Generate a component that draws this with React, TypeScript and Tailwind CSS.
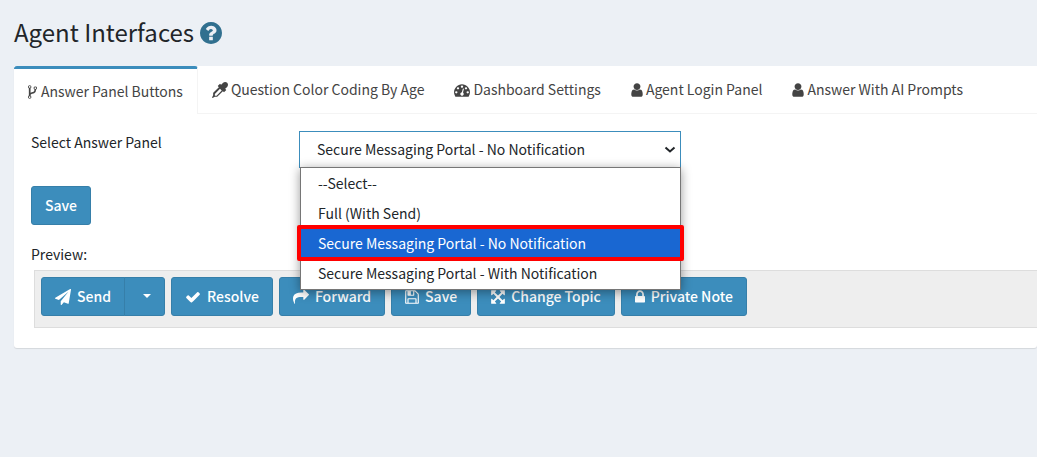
import { useState, type ReactNode } from "react";

type IconShape = { box: string; size: string; d: string };

// 1792 units tall, cropped to each glyph's advance width
const ICONS: Record<string, IconShape> = {
  fork: {
    box: "384 0 1024 1792",
    size: "h-4 w-[9px]",
    d: "M672 1472q0-40-28-68t-68-28-68 28-28 68 28 68 68 28 68-28 28-68zm0-1152q0-40-28-68t-68-28-68 28-28 68 28 68 68 28 68-28 28-68zm640 128q0-40-28-68t-68-28-68 28-28 68 28 68 68 28 68-28 28-68zm96 0q0 52-26 96.5t-70 69.5q-2 287-226 414-67 38-203 81-128 40-169.5 71t-41.5 100v26q44 25 70 69.5t26 96.5q0 80-56 136t-136 56-136-56-56-136q0-52 26-96.5t70-69.5v-820q-44-25-70-69.5t-26-96.5q0-80 56-136t136-56 136 56 56 136q0 52-26 96.5t-70 69.5v497q54-26 154-57 55-17 87.5-29.5t70.5-31 59-39.5 40.5-51 28-69.5 8.5-91.5q-44-25-70-69.5t-26-96.5q0-80 56-136t136-56 136 56 56 136z",
  },
  dropper: {
    box: "0 0 1792 1792",
    size: "size-4",
    d: "M1698 94q94 94 94 226.5t-94 225.5l-225 223 104 104q10 10 10 23t-10 23l-210 210q-10 10-23 10t-23-10l-105-105-603 603q-37 37-90 37h-203l-256 128-64-64 128-256v-203q0-53 37-90l603-603-105-105q-10-10-10-23t10-23l210-210q10-10 23-10t23 10l104 104 223-225q93-94 225.5-94t226.5 94zm-1186 1442l576-576-192-192-576 576v192h192z",
  },
  gauge: {
    box: "0 0 1792 1792",
    size: "size-4",
    d: "M384 1152q0-53-37.5-90.5t-90.5-37.5-90.5 37.5-37.5 90.5 37.5 90.5 90.5 37.5 90.5-37.5 37.5-90.5zm192-448q0-53-37.5-90.5t-90.5-37.5-90.5 37.5-37.5 90.5 37.5 90.5 90.5 37.5 90.5-37.5 37.5-90.5zm428 481l101-382q6-26-7.5-48.5t-38.5-29.5-48 6.5-30 39.5l-101 382q-60 5-107 43.5t-63 98.5q-20 77 20 146t117 89 146-20 89-117q16-60-6-117t-72-91zm660-33q0-53-37.5-90.5t-90.5-37.5-90.5 37.5-37.5 90.5 37.5 90.5 90.5 37.5 90.5-37.5 37.5-90.5zm-640-640q0-53-37.5-90.5t-90.5-37.5-90.5 37.5-37.5 90.5 37.5 90.5 90.5 37.5 90.5-37.5 37.5-90.5zm448 192q0-53-37.5-90.5t-90.5-37.5-90.5 37.5-37.5 90.5 37.5 90.5 90.5 37.5 90.5-37.5 37.5-90.5zm320 448q0 261-141 483-19 29-54 29h-1402q-35 0-54-29-141-221-141-483 0-182 71-348t191-286 286-191 348-71 348 71 286 191 191 286 71 348z",
  },
  user: {
    box: "256 0 1280 1792",
    size: "h-4 w-3",
    d: "M1536 1399q0 109-62.5 187t-150.5 78h-854q-88 0-150.5-78t-62.5-187q0-85 8.5-160.5t31.5-152 58.5-131 94-89 134.5-34.5q131 128 313 128t313-128q76 0 134.5 34.5t94 89 58.5 131 31.5 152 8.5 160.5zm-256-887q0 159-112.5 271.5t-271.5 112.5-271.5-112.5-112.5-271.5 112.5-271.5 271.5-112.5 271.5 112.5 112.5 271.5z",
  },
  question: {
    box: "128 0 1536 1792",
    size: "h-[26px] w-[22px]",
    d: "M1024 1376v-192q0-14-9-23t-23-9h-192q-14 0-23 9t-9 23v192q0 14 9 23t23 9h192q14 0 23-9t9-23zm256-672q0-88-55.5-163t-138.5-116-170-41q-243 0-371 213-15 24 8 42l132 100q7 6 19 6 16 0 25-12 53-68 86-92 34-24 86-24 48 0 85.5 26t37.5 59q0 38-20 61t-68 45q-63 28-115.5 86.5t-52.5 125.5v36q0 14 9 23t23 9h192q14 0 23-9t9-23q0-19 21.5-49.5t54.5-49.5q32-18 49-28.5t46-35 44.5-48 28-60.5 12.5-81zm384 192q0 209-103 385.5t-279.5 279.5-385.5 103-385.5-103-279.5-279.5-103-385.5 103-385.5 279.5-279.5 385.5-103 385.5 103 279.5 279.5 103 385.5z",
  },
  send: {
    box: "0 0 1792 1792",
    size: "size-4",
    d: "M1764 11q33 24 27 64l-256 1536q-5 29-32 45-14 8-31 8-11 0-24-5l-453-185-242 295q-18 23-49 23-13 0-22-4-19-7-30.5-23.5t-11.5-36.5v-349l864-1059-1069 925-395-162q-37-14-40-55-2-40 32-59l1664-960q15-9 32-9 20 0 36 11z",
  },
  check: {
    box: "0 0 1792 1792",
    size: "size-4",
    d: "M1671 566q0 40-28 68l-724 724-136 136q-28 28-68 28t-68-28l-136-136-362-362q-28-28-28-68t28-68l136-136q28-28 68-28t68 28l294 295 656-657q28-28 68-28t68 28l136 136q28 28 28 68z",
  },
  share: {
    box: "0 0 1792 1792",
    size: "size-4",
    d: "M1792 640q0 26-19 45l-512 512q-19 19-45 19t-45-19-19-45v-256h-224q-98 0-175.5 6t-154 21.5-133 42.5-105.5 69.5-80 101-48.5 138.5-17.5 181q0 55 5 123 0 6 2.5 23.5t2.5 26.5q0 15-8.5 25t-23.5 10q-16 0-28-17-7-9-13-22t-13.5-30-10.5-24q-127-285-127-451 0-199 53-333 162-403 875-403h224v-256q0-26 19-45t45-19 45 19l512 512q19 19 19 45z",
  },
  floppy: {
    box: "128 0 1536 1792",
    size: "h-4 w-[14px]",
    d: "M512 1536h768v-384h-768v384zm896 0h128v-896q0-14-10-38.5t-20-34.5l-281-281q-10-10-34-20t-39-10v416q0 40-28 68t-68 28h-576q-40 0-68-28t-28-68v-416h-128v1280h128v-416q0-40 28-68t68-28h832q40 0 68 28t28 68v416zm-384-928v-320q0-13-9.5-22.5t-22.5-9.5h-192q-13 0-22.5 9.5t-9.5 22.5v320q0 13 9.5 22.5t22.5 9.5h192q13 0 22.5-9.5t9.5-22.5zm640 32v928q0 40-28 68t-68 28h-1344q-40 0-68-28t-28-68v-1344q0-40 28-68t68-28h928q40 0 88 20t76 48l280 280q28 28 48 76t20 88z",
  },
  arrows: {
    box: "128 0 1536 1792",
    size: "h-4 w-[14px]",
    d: "M1411 541l-355 355 355 355 144-144q29-31 70-14 39 17 39 59v448q0 26-19 45t-45 19h-448q-42 0-59-40-17-39 14-69l144-144-355-355-355 355 144 144q31 30 14 69-17 40-59 40h-448q-26 0-45-19t-19-45v-448q0-42 40-59 39-17 69 14l144 144 355-355-355-355-144 144q-19 19-45 19-12 0-24-5-40-17-40-59v-448q0-26 19-45t45-19h448q42 0 59 40 17 39-14 69l-144 144 355 355 355-355-144-144q-31-30-14-69 17-40 59-40h448q26 0 45 19t19 45v448q0 42-39 59-13 5-25 5-26 0-45-19z",
  },
  lock: {
    box: "320 0 1152 1792",
    size: "h-4 w-[10px]",
    d: "M640 768h512v-192q0-106-75-181t-181-75-181 75-75 181v192zm832 96v576q0 40-28 68t-68 28h-960q-40 0-68-28t-28-68v-576q0-40 28-68t68-28h32v-192q0-184 132-316t316-132 316 132 132 316v192h32q40 0 68 28t28 68z",
  },
};

function Icon({ name }: { name: string }) {
  const icon = ICONS[name];
  return (
    <svg viewBox={icon.box} className={`${icon.size} shrink-0 fill-current`} aria-hidden="true">
      <path d={icon.d} />
    </svg>
  );
}

const TABS = [
  { label: "Question Color Coding By Age", icon: "dropper" },
  { label: "Dashboard Settings", icon: "gauge" },
  { label: "Agent Login Panel", icon: "user" },
  { label: "Answer With AI Prompts", icon: "user" },
];

const PANELS = [
  "--Select--",
  "Full (With Send)",
  "Secure Messaging Portal - No Notification",
  "Secure Messaging Portal - With Notification",
];

const ACTIONS = [
  { label: "Resolve", icon: "check" },
  { label: "Forward", icon: "share" },
  { label: "Save", icon: "floppy" },
  { label: "Change Topic", icon: "arrows" },
  { label: "Private Note", icon: "lock" },
];

function Button({ children, className = "rounded-[3px]" }: { children: ReactNode; className?: string }) {
  return (
    <button
      type="button"
      className={`flex h-[39px] items-center gap-1.5 border border-[#367fa9] bg-[#3c8dbc] px-[13px] font-medium whitespace-nowrap text-white ${className}`}
    >
      {children}
    </button>
  );
}

export default function App() {
  const [panel, setPanel] = useState(PANELS[2]);

  return (
    <div className="min-h-screen overflow-hidden bg-[#ecf0f5] pt-4 pl-3.5 font-['Noto_Sans_CJK_SC',sans-serif] text-[14px] leading-5 text-[#212529]">
      <h1 className="flex h-[34px] items-center gap-1.5 text-[24px] leading-8">
        <span className="pb-0.5">Agent Interfaces</span>
        <a href="#help" aria-label="Help" className="text-[#31708f]">
          <Icon name="question" />
        </a>
      </h1>

      <div className="mt-4 rounded-b-[3px] bg-white pb-5 shadow-[0_1px_1px_rgba(0,0,0,0.1)]">
        <nav className="flex h-12 gap-0.5 border-b border-[#f4f4f4] text-[#444]">
          <a
            href="#answer-panel"
            className="-mr-0.5 -mb-px flex items-center gap-1 rounded-t-[3px] border-t-3 border-r border-t-[#3c8dbc] border-r-[#f4f4f4] bg-white px-3.5 whitespace-nowrap"
          >
            <Icon name="fork" />
            <span className="pb-0.5">Answer Panel Buttons</span>
          </a>
          {TABS.map((t) => (
            <a key={t.label} href="#tab" className="flex items-center gap-[3px] px-3.5 whitespace-nowrap">
              <Icon name={t.icon} />
              <span className="pb-0.5">{t.label}</span>
            </a>
          ))}
        </nav>

        <div className="px-[17px] pt-[17px]">
          <div className="flex h-[55px]">
            <label htmlFor="panel" className="w-[268px] shrink-0 pt-px">
              Select Answer Panel
            </label>
            <div className="relative w-[382px]">
              <select
                id="panel"
                value={panel}
                onChange={(e) => setPanel(e.target.value)}
                className="h-[37px] w-full appearance-none border border-[#3c8dbc] bg-white px-[17px] pb-0.5"
              >
                {PANELS.map((p) => (
                  <option key={p}>{p}</option>
                ))}
              </select>
              <svg viewBox="0 0 12 8" className="pointer-events-none absolute top-[15px] right-[5px] h-2 w-3 fill-none stroke-[#212529] stroke-2">
                <path d="M1.5 1.5L6 5.5l4.5-4" />
              </svg>
              <ul
                role="listbox"
                aria-label="Answer panels"
                className="absolute top-9 right-0 left-px z-10 border border-[#767676] bg-white pb-px shadow-[0_2px_10px_rgba(0,0,0,0.4)]"
              >
                {PANELS.map((p) => (
                  <li
                    key={p}
                    role="option"
                    aria-selected={p === panel}
                    onClick={() => setPanel(p)}
                    className={`relative flex h-[30px] items-center px-[17px] ${p === panel ? "bg-[#1967d2] text-white" : ""}`}
                  >
                    {p}
                    {p === panel && <span className="absolute -inset-x-1 -inset-y-[3px] z-10 rounded-xs border-4 border-[#ff0000]" />}
                  </li>
                ))}
              </ul>
            </div>
          </div>

          <Button>
            <span className="pb-0.5">Save</span>
          </Button>

          <p className="mt-[19px]">Preview:</p>
          <div className="mt-1.5 -mr-5 ml-[3px] flex h-[58px] items-start gap-1.5 border border-[#ddd] bg-[#eee] p-1.5">
            <div className="flex">
              <Button className="rounded-l-[3px]">
                <Icon name="send" />
                <span className="pb-0.5">Send</span>
              </Button>
              <button
                type="button"
                aria-label="More send options"
                className="-ml-px flex h-[39px] w-[41px] items-center justify-center rounded-r-[3px] border border-[#367fa9] bg-[#3c8dbc] pb-0.5 pl-1"
              >
                <span className="border-x-4 border-t-4 border-x-transparent border-t-white" />
              </button>
            </div>
            {ACTIONS.map((a) => (
              <Button key={a.label}>
                <Icon name={a.icon} />
                <span className="pb-0.5">{a.label}</span>
              </Button>
            ))}
          </div>
        </div>
      </div>
    </div>
  );
}
